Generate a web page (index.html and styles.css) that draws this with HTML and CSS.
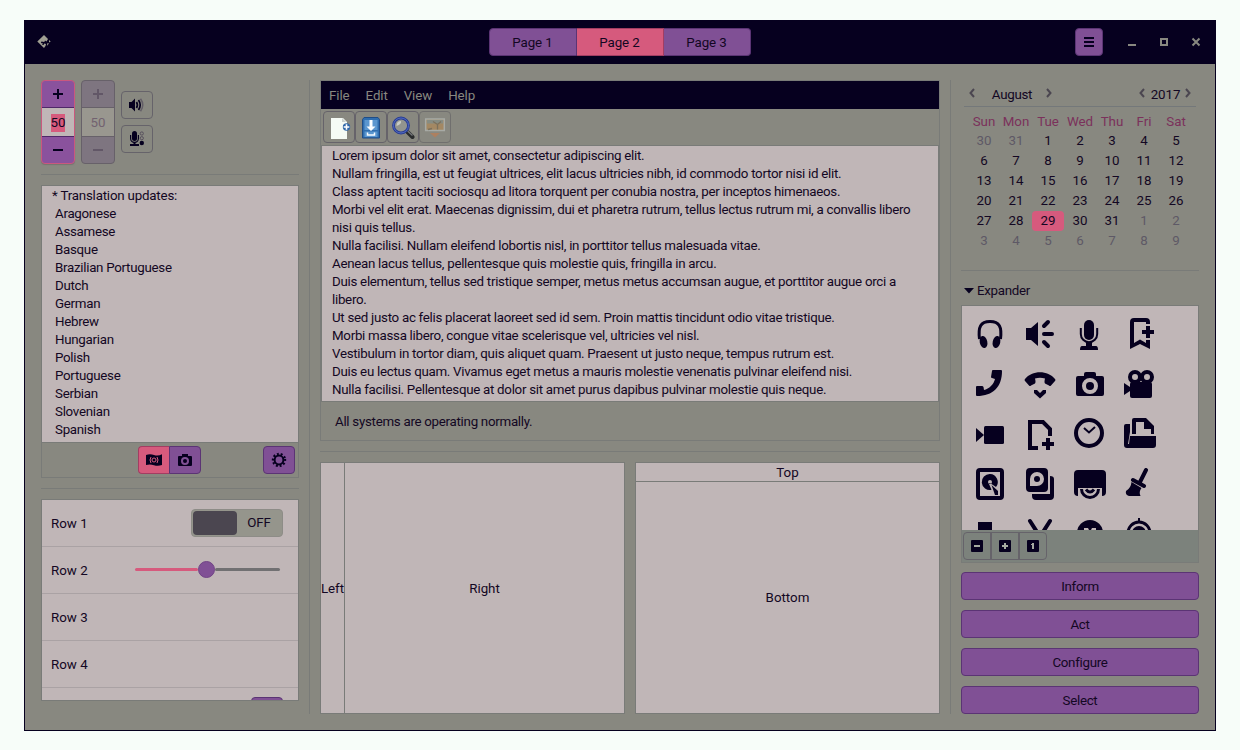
FILE: index.html
```html
<!DOCTYPE html>
<html lang="en">
<head>
<meta charset="utf-8">
<title>Widget Factory</title>
<link rel="stylesheet" href="styles.css">
</head>
<body>
<div class="window">
  <header class="titlebar">
    <svg class="app-icon" width="14" height="14" viewBox="0 0 14 14"><path fill="#a09f92" d="M7 0l4 4-1.500 2.500L8 5.500 7.300 7 4.500 6.500 3.800 8 6 8.500 5 10l1.500 0 .8-1.500L9 9l-.5 2L7 13 .3 6.500z"/><path fill="#a09f92" d="M12 5l1.700 1.600-1.700 1zM10.500 8l1.500.5L9.800 11z"/></svg>
    <div class="tabs"><button class="btn">Page 1</button><button class="btn active">Page 2</button><button class="btn">Page 3</button></div>
    <div class="controls">
      <button class="btn menu-btn"><svg width="10" height="10"><path fill="#06001f" d="M0 0h10v2H0zM0 4h10v2H0zM0 8h10v2H0z"/></svg></button>
      <svg class="ctl" width="12" height="12"><path fill="#888880" d="M2 8h8v2H2z"/></svg>
      <svg class="ctl" width="12" height="12"><path fill="none" stroke="#888880" stroke-width="2" d="M3 3h6v6H3z"/></svg>
      <svg class="ctl" width="12" height="12"><path fill="none" stroke="#888880" stroke-width="2" d="M2.500 2.500l7 7M9.500 2.500l-7 7"/></svg>
    </div>
  </header>
  <main class="content">
    <section class="left">
      <div class="spins">
        <div class="spin"><span class="step"><svg width="10" height="10"><path fill="#06001f" d="M4 0h2v10H4zM0 4h10v2H0z"/></svg></span><span class="value"><mark>50</mark></span><span class="step"><svg width="10" height="10"><path fill="#06001f" d="M0 4h10v2H0z"/></svg></span></div>
        <div class="spin off"><span class="step"><svg width="10" height="10"><path fill="#625767" d="M4 0h2v10H4zM0 4h10v2H0z"/></svg></span><span class="value">50</span><span class="step"><svg width="10" height="10"><path fill="#625767" d="M0 4h10v2H0z"/></svg></span></div>
        <div class="volumes">
          <button class="flat"><svg width="16" height="16" viewBox="0 0 16 16"><path fill="#06001f" d="M0 5h2.500L6 1.500v13L2.500 11H0z"/><path fill="none" stroke="#06001f" stroke-width="1.700" d="M7.500 5q1.800 3 0 6M9.500 3q3.400 5 0 10"/><path fill="none" stroke="#625d66" stroke-width="1.500" d="M11.500 1.800q4.500 6.200 0 12.400"/></svg></button>
          <button class="flat"><svg width="16" height="16" viewBox="0 0 16 16"><rect x="3" y="0" width="5" height="10" rx="2.500" fill="#06001f"/><path fill="none" stroke="#06001f" stroke-width="1.200" d="M1.600 4v3.500a3.900 3.900 0 0 0 7.800 0V4"/><path fill="#06001f" d="M4.500 11h2v2.500h-2zM1 13h9v2H1z"/><g fill="none" stroke="#57505d"><circle cx="12.800" cy="2.500" r="1.600"/><circle cx="12.800" cy="7.200" r="1.600"/></g><circle cx="12.800" cy="12" r="2.200" fill="#06001f"/></svg></button>
        </div>
      </div>
      <hr class="after-spins">
      <div class="language-box">
        <div class="languages"><p class="heading">* Translation updates:</p><p>Aragonese</p><p>Assamese</p><p>Basque</p><p>Brazilian Portuguese</p><p>Dutch</p><p>German</p><p>Hebrew</p><p>Hungarian</p><p>Polish</p><p>Portuguese</p><p>Serbian</p><p>Slovenian</p><p>Spanish</p></div>
        <div class="language-bar">
          <div class="pair">
            <button class="btn active"><svg width="16" height="16" viewBox="0 0 16 16"><path fill="#06001f" d="M0 3q4-1.500 8 0t8-.8V13q-4 1.500-8 .2T0 13z"/><path fill="none" stroke="#d65a7d" d="M5 5q-2 3 0 6M11 5q2 3 0 6"/><circle cx="8" cy="8" r="2" fill="none" stroke="#d65a7d"/></svg></button>
            <button class="btn"><svg width="16" height="16" viewBox="0 0 32 32"><path fill="#06001f" fill-rule="evenodd" d="M10 4h12v4h6q2 0 2 2v16q0 2-2 2H4q-2 0-2-2V10q0-2 2-2h6zM16 10a8 8 0 1 0 0 16 8 8 0 1 0 0-16z"/><circle cx="16" cy="18" r="4" fill="#06001f"/></svg></button>
          </div>
          <button class="btn gear"><svg width="16" height="16" viewBox="0 0 16 16"><circle cx="8" cy="8" r="4.400" fill="none" stroke="#06001f" stroke-width="2"/><circle cx="8" cy="8" r="6" fill="none" stroke="#06001f" stroke-width="2.400" stroke-dasharray="1.900 1.870" transform="rotate(-9 8 8)"/></svg></button>
        </div>
      </div>
      <hr class="after-list">
      <div class="rows">
        <div class="row"><span>Row 1</span><div class="switch"><i></i><b>OFF</b></div></div>
        <div class="row"><span>Row 2</span><div class="slider"><i class="done"></i><i class="knob"></i><i class="rest"></i></div></div>
        <div class="row"><span>Row 3</span></div>
        <div class="row"><span>Row 4</span></div>
        <div class="row last"><button class="btn"></button></div>
      </div>
    </section>
    <div class="divider"></div>
    <section class="middle">
      <div class="editor">
        <nav class="menubar"><span>File</span><span>Edit</span><span>View</span><span>Help</span></nav>
        <div class="toolbar">
          <button class="flat"><svg width="24" height="24" viewBox="0 0 24 24"><path fill="#f5fbf5" d="M4 3h12l4 4v17H4z"/><path fill="#cbd2cd" d="M15 3v4h4z"/><circle cx="19.500" cy="12" r="3.700" fill="#2f67a8"/><path stroke="#fff" stroke-width="1.600" d="M19.500 9.200v5.600M16.700 12h5.600"/></svg></button>
          <button class="flat"><svg width="24" height="24" viewBox="0 0 24 24"><path fill="#306eaf" stroke="#204d86" d="M5 2.500h14l1.500 2v18.500h-17V4.500z"/><path fill="#5a96cf" d="M5.500 5h13v10h-13zM5.500 16.500h13V22h-13z"/><path fill="#f8fcff" d="M10.500 5h3v6.500h3L12 16l-4.500-4.500h3z"/><path fill="none" stroke="#f8fcff" stroke-width="1.500" d="M8.500 17.500V20h7v-2.500"/></svg></button>
          <button class="flat"><svg width="24" height="24" viewBox="0 0 24 24"><path stroke="#292b2c" stroke-width="4" stroke-linecap="round" d="M16.500 17l5 5"/><path stroke="#75777a" stroke-width="1.300" d="M16.500 16l5 4.500"/><circle cx="10" cy="10.500" r="7.500" fill="#92948f" stroke="#283c92" stroke-width="2.800"/><circle cx="10" cy="10.500" r="7.500" fill="none" stroke="#526bc0"/><path fill="#c8cbc4" d="M5.500 11q0-5 4.500-5 1 3-4.500 5"/></svg></button>
          <button class="flat dim"><svg width="24" height="24" viewBox="0 0 24 24"><path fill="#a38863" stroke="#a7aaa5" stroke-width="1.500" d="M2.700 4h18.600v11.500H2.700z"/><path fill="#868c83" d="M4 5h16v3.500H4z"/><path fill="none" stroke="#7b705c" stroke-width="1.300" d="M10 6.500l4.500 3L18 6.500M14.500 9v5.500M5 14.500l4-1"/><path fill="#ad8060" d="M7 18h10l-5 4.500z"/></svg></button>
        </div>
        <div class="text">Lorem ipsum dolor sit amet, consectetur adipiscing elit.<br>Nullam fringilla, est ut feugiat ultrices, elit lacus ultricies nibh, id commodo tortor nisi id elit.<br>Class aptent taciti sociosqu ad litora torquent per conubia nostra, per inceptos himenaeos.<br>Morbi vel elit erat. Maecenas dignissim, dui et pharetra rutrum, tellus lectus rutrum mi, a convallis libero<br>nisi quis tellus.<br>Nulla facilisi. Nullam eleifend lobortis nisl, in porttitor tellus malesuada vitae.<br>Aenean lacus tellus, pellentesque quis molestie quis, fringilla in arcu.<br>Duis elementum, tellus sed tristique semper, metus metus accumsan augue, et porttitor augue orci a<br>libero.<br>Ut sed justo ac felis placerat laoreet sed id sem. Proin mattis tincidunt odio vitae tristique.<br>Morbi massa libero, congue vitae scelerisque vel, ultricies vel nisl.<br>Vestibulum in tortor diam, quis aliquet quam. Praesent ut justo neque, tempus rutrum est.<br>Duis eu lectus quam. Vivamus eget metus a mauris molestie venenatis pulvinar eleifend nisi.<br>Nulla facilisi. Pellentesque at dolor sit amet purus dapibus pulvinar molestie quis neque.</div>
        <div class="status">All systems are operating normally.</div>
      </div>
      <hr class="after-editor">
      <div class="panes">
        <div class="pane horizontal"><div class="pane-left">Left</div><div class="pane-right">Right</div></div>
        <div class="pane vertical"><div class="pane-top">Top</div><div class="pane-bottom">Bottom</div></div>
      </div>
    </section>
    <div class="divider"></div>
    <section class="right">
      <div class="cal-head">
        <svg width="8" height="10"><path d="M6 1 2.500 5 6 9"/></svg><span class="month">August</span><svg width="8" height="10"><path d="M2 1 5.500 5 2 9"/></svg>
        <svg class="year-prev" width="8" height="10"><path d="M6 1 2.500 5 6 9"/></svg><span class="year">2017</span><svg width="8" height="10"><path d="M2 1 5.500 5 2 9"/></svg>
      </div>
      <div class="calendar">
        <b>Sun</b><b>Mon</b><b>Tue</b><b>Wed</b><b>Thu</b><b>Fri</b><b>Sat</b>
        <i>30</i><i>31</i><span>1</span><span>2</span><span>3</span><span>4</span><span>5</span>
        <span>6</span><span>7</span><span>8</span><span>9</span><span>10</span><span>11</span><span>12</span>
        <span>13</span><span>14</span><span>15</span><span>16</span><span>17</span><span>18</span><span>19</span>
        <span>20</span><span>21</span><span>22</span><span>23</span><span>24</span><span>25</span><span>26</span>
        <span>27</span><span>28</span><span class="today">29</span><span>30</span><span>31</span><i>1</i><i>2</i>
        <i>3</i><i>4</i><i>5</i><i>6</i><i>7</i><i>8</i><i>9</i>
      </div>
      <hr class="after-cal">
      <div class="expander"><svg width="10" height="6"><path fill="#06001f" d="M0 0h10L5 5.500z"/></svg>Expander</div>
      <div class="icon-box">
        <div class="icons">
          <svg viewBox="0 0 32 32"><path class="s3" d="M5.500 21C4 9 6.500 3.500 16 3.500S28 9 26.500 21"/><ellipse cx="9.500" cy="24" rx="3.800" ry="6.200" transform="rotate(-12 9.500 24)"/><ellipse cx="22.500" cy="24" rx="3.800" ry="6.200" transform="rotate(12 22.500 24)"/></svg>
          <svg viewBox="0 0 32 32"><path d="M2 10h5l7-6v24l-7-6H2z"/><path class="s4r" d="M20 8l4-4M20 16h8M20 24l4 4"/></svg>
          <svg viewBox="0 0 32 32"><rect x="10" y="2" width="10" height="20" rx="5"/><path class="s2" d="M6.800 10v6a8.200 8.200 0 0 0 16.400 0v-6"/><path d="M12 24h6v4h4q2 0 2 4H6q0-4 2-4h4z"/></svg>
          <svg viewBox="0 0 32 32"><path d="M6 31V4q0-4 4-4h12q4 0 4 4v2h-4V4H10v21l6-3.500 6 3.500v-3h4v9l-10-5z"/><path d="M22 8h4v4h4v4h-4v4h-4v-4h-4v-4h4z"/></svg>
          <svg viewBox="0 0 32 32"><path d="M18 3q0-1 1-1h8q1 0 1 1c0 16-9 25-25 25q-1 0-1-1v-8q0-1 1-1h5q1 0 1.500 1l.5 3c5-1 10-6 11-11l-3-1q-1 0-1-1z"/></svg>
          <svg viewBox="0 0 32 32"><path d="M1 11C8 2 24 2 31 11q1 1 0 2l-4 4.500q-1 1-2 0l-4-2q-1-1 0-5-5-1.500-10 0 1 4 0 5l-4 2q-1 1-2 0L1 13q-1-1 0-2z"/><path d="M10 22h3l3 3 3-3h3v3l-6 5.500L10 25z"/></svg>
          <svg viewBox="0 0 32 32"><path fill-rule="evenodd" d="M10 6q0-2 2-2h8q2 0 2 2v2h6q2 0 2 2v16q0 2-2 2H4q-2 0-2-2V10q0-2 2-2h6zM16 10a8 8 0 1 0 0 16 8 8 0 1 0 0-16z"/><circle cx="16" cy="18" r="4"/></svg>
          <svg viewBox="0 0 32 32"><circle class="s4" cx="11" cy="9" r="5"/><circle class="s4" cx="23" cy="9" r="5"/><rect x="6" y="14" width="22" height="16" rx="2"/><path d="M0 15l6 4v4l-6 4z"/></svg>
          <svg viewBox="0 0 32 32"><path d="M2 10l8 7-8 7z"/><rect x="10" y="8" width="20" height="18" rx="1.500"/></svg>
          <svg viewBox="0 0 32 32"><path class="s4" d="M14 30H6V4h13l7 7v7"/><path d="M22 20h4v4h4v4h-4v4h-4v-4h-4v-4h4z"/></svg>
          <svg viewBox="0 0 32 32"><circle class="s4" cx="15" cy="15" r="13"/><path class="s2" d="M10 10l5 4.500L21 9"/></svg>
          <svg viewBox="0 0 32 32"><path d="M8 16V2q0-2 2-2h12l8 8v8h-3v-5h-7V4h-8v12z"/><path d="M6 18h26v9q0 3-3 3H3q-3 0-3-3V8q0-2 2-2h4v8L4 26h1z"/></svg>
          <svg viewBox="0 0 32 32"><rect class="s4" x="4" y="2" width="24" height="28" rx="2"/><path fill-rule="evenodd" d="M16 6a8 8 0 1 0 1.500 15.800L15 16l1-1 6 4A8 8 0 0 0 16 6zM16 12a2 2 0 1 1 0 4 2 2 0 1 1 0-4z"/><path d="M17.500 17l6.500 6v4h-3z"/></svg>
          <svg viewBox="0 0 32 32"><path fill-rule="evenodd" d="M6 0h14q4 0 4 4v16q0 4-4 4H6q-4 0-4-4V4q0-4 4-4zM13 4a7 7 0 0 0-7 7v7h7a7 7 0 0 0 0-14z"/><circle cx="13" cy="11" r="3"/><path d="M26 8q4 0 4 3v17q0 4-4 4H12q-4 0-4-4v-2h18z"/></svg>
          <svg viewBox="0 0 32 32"><path d="M4 2h24q4 0 4 4v18q0 4-4 4V20H4v8q-4 0-4-4V6q0-4 4-4z"/><path class="s3" d="M7.500 21a8.500 8.500 0 0 0 17 0M12 21.500q4 5 8 0"/></svg>
          <svg viewBox="0 0 32 32"><path class="s4r" d="M22 2l-6 12M9 12l11 6"/><path d="M7.500 14l10 6q-3 4-1 8H5q-4-1-3-5 5-3 5.500-9z"/></svg>
          <svg viewBox="0 0 32 32"><path d="M4 4h14v10h8v18H4z"/></svg>
          <svg viewBox="0 0 32 32"><path class="s4r" d="M6 3l14 22M26 3L12 25"/></svg>
          <svg viewBox="0 0 32 32"><path fill-rule="evenodd" d="M16 2a13 13 0 1 0 0 26 13 13 0 1 0 0-26zM10 10h4l1 2v3h-5zM18 10h4v5h-5v-3z"/></svg>
          <svg viewBox="0 0 32 32"><circle class="s3" cx="15" cy="15" r="11"/><circle cx="15" cy="15" r="7"/><path d="M14 0h2v5h-2z"/></svg>
        </div>
        <div class="icon-bar">
          <div class="trio">
            <span><svg width="12" height="12"><rect width="12" height="12" rx="1" fill="#06001f"/><path fill="#a5aaa1" d="M3 5h6v2H3z"/></svg></span>
            <span><svg width="12" height="12"><rect width="12" height="12" rx="1" fill="#06001f"/><path fill="#a5aaa1" d="M5 3h2v2h2v2H7v2H5V7H3V5h2z"/></svg></span>
            <span><svg width="12" height="12"><rect width="12" height="12" rx="1" fill="#06001f"/><path fill="#a5aaa1" d="M5 3h2v6H5V5H4V4h1z"/></svg></span>
          </div>
        </div>
      </div>
      <div class="actions"><button class="btn">Inform</button><button class="btn">Act</button><button class="btn">Configure</button><button class="btn">Select</button></div>
    </section>
  </main>
</div>
</body>
</html>
```
FILE: styles.css
```css
* { box-sizing: border-box; }
body { margin: 0; padding: 20px 24px 19px; height: 750px; background: #f7fdf9; color: #130723; font: 13.33px/18px Roboto, sans-serif; letter-spacing: -0.285px; overflow: hidden; }
p, hr { margin: 0; }
svg { display: block; flex: none; }
button { font: inherit; letter-spacing: inherit; color: inherit; padding: 0; margin: 0; }
hr { border: 0; height: 1px; background: #797b78; flex: none; }
i, b { font-style: normal; font-weight: normal; }

.window { width: 1192px; height: 711px; border: 1px solid #06001f; background: #888880; display: flex; flex-direction: column; }
.titlebar { height: 43px; flex: none; background: #06001f; display: grid; grid-template-columns: 1fr 262px 1fr; align-items: center; padding: 0 13px 1px 12px; }
.tabs { display: flex; height: 28px; letter-spacing: -0.1px; }
.tabs .btn { width: 88px; border-radius: 0; padding-top: 2px; }
.tabs .btn + .btn { border-left: 0; width: 87px; }
.tabs .btn:first-child { border-radius: 4px 0 0 4px; }
.tabs .btn:last-child { border-radius: 0 4px 4px 0; }
.controls { display: flex; justify-content: flex-end; align-items: center; gap: 20px; }
.menu-btn { width: 28px; margin-right: 3px; }
.btn { height: 28px; border: 1px solid #5b3474; border-radius: 4px; background: #805095; display: flex; align-items: center; justify-content: center; flex: none; }
.btn.active { background: #d65a7d; border-color: #a33d62; }
.flat { width: 32px; height: 28px; border: 1px solid #66636a; border-radius: 4px; background: none; display: flex; align-items: center; justify-content: center; flex: none; }

.content { flex: 1; display: flex; padding: 16px; min-height: 0; }
.divider { width: 1px; margin: 0 10px; background: #797b78; flex: none; }
.left { width: 258px; display: flex; flex-direction: column; }
.spins { display: flex; gap: 6px; height: 84px; letter-spacing: 0; }
.spin { width: 34px; border: 1px solid #ca587e; border-radius: 4px; background: #8a529d; display: grid; grid-template-rows: 26px 30px 26px; overflow: hidden; box-shadow: 0 1px 1px #77756f; }
.step, .value { display: flex; align-items: center; justify-content: center; }
.value { background: #c0b6b7; border: solid #4f2868; border-width: 1px 0; padding-top: 1px; }
.value mark { background: #d65a7d; color: #130723; }
.spin.off { background: #7e7580; border-color: #676169; color: #726270; box-shadow: none; }
.off .value { background: #99978f; border-color: #676169; }
.volumes { display: flex; flex-direction: column; gap: 6px; padding-top: 11px; }
.after-spins { margin: 10px 0; }
.language-box { height: 293px; border: 1px solid #797b78; flex: none; }
.languages { height: 257px; background: #c0b6b7; border-bottom: 1px solid #797b78; padding: 1px 13px 0; }
.languages .heading { margin-left: -3px; letter-spacing: -0.2px; }
.language-bar { height: 34px; display: grid; grid-template-columns: 96px 63px 1fr; padding: 3px 3px 0 0; }
.pair { display: flex; grid-column: 2; }
.pair .btn { width: 31px; border-radius: 4px 0 0 4px; border-right: 0; }
.pair .btn + .btn { width: 32px; border-radius: 0 4px 4px 0; border-right: 1px solid #5b3474; }
.gear { width: 32px; justify-self: end; }
.after-list { margin: 10px 0; }
.rows { height: 202px; border: 1px solid #797b78; background: #c0b6b7; overflow: hidden; flex: none; letter-spacing: 0; }
.row { height: 47px; border-bottom: 1px solid #aaa2a4; display: flex; align-items: center; justify-content: space-between; padding: 1px 15px 0 9px; }
.row.last { justify-content: flex-end; align-items: flex-start; padding-top: 9px; }
.last .btn { width: 32px; }
.switch { width: 92px; height: 28px; margin-top: -1px; border: 1px solid #8d8c87; border-radius: 4px; background: #95958c; display: flex; padding: 1px; align-items: center; letter-spacing: -0.2px; }
.switch i { width: 44px; height: 24px; border-radius: 4px; background: #4b4650; }
.switch b { flex: 1; text-align: center; }
.slider { width: 145px; height: 17px; display: flex; align-items: center; margin: -3px 3px 0 0; }
.done, .rest { height: 3px; background: #d65a7d; border-radius: 2px; width: 63px; }
.rest { flex: 1; background: #717072; }
.knob { width: 17px; height: 17px; border-radius: 50%; border: 1px solid #714486; background: #805095; }

.middle { width: 620px; display: flex; flex-direction: column; }
.editor { height: 361px; border: 1px solid #797b78; flex: none; }
.menubar { height: 28px; background: #06001f; color: #888880; display: flex; gap: 16px; padding: 6px 8px 4px; letter-spacing: -0.1px; }
.toolbar { height: 36px; display: flex; padding: 2px; }
.toolbar .flat { height: 32px; }
.dim { border-color: #706f6e; }
.text { height: 257px; background: #c0b6b7; border: 1px solid #797b78; padding: 1px 10px 0; white-space: nowrap; }
.status { padding: 11px 14px; }
.after-editor { margin: 10px 0; }
.panes { flex: 1; display: flex; justify-content: space-between; letter-spacing: 0; }
.pane { width: 305px; border: 1px solid #797b78; background: #c0b6b7; display: flex; }
.vertical { flex-direction: column; }
.pane > div { display: flex; align-items: center; justify-content: center; }
.horizontal > div { padding-top: 2px; }
.pane-left { width: 24px; border-right: 1px solid #797b78; }
.pane-right, .pane-bottom { flex: 1; }
.pane > .pane-top { height: 19px; border-bottom: 1px solid #797b78; padding-top: 2px; }

.right { width: 238px; display: flex; flex-direction: column; }
.cal-head { height: 27px; display: flex; align-items: flex-start; margin: 0 3px; padding: 5px 4px 0; border-bottom: 1px solid #74787a; flex: none; }
.cal-head path { fill: none; stroke: #4b4650; stroke-width: 2; }
.cal-head svg { margin-top: 3px; }
.month { width: 69px; padding: 1px 0 0 3px; text-align: center; }
.year-prev { margin-left: auto; }
.year { width: 38px; padding: 1px 0 0 1px; text-align: center; letter-spacing: -0.1px; }
.calendar { display: grid; grid-template-columns: repeat(7, 32px); grid-template-rows: 20px repeat(6, 20px); padding: 4px 7px 0; line-height: 20px; text-align: center; height: 144px; letter-spacing: 0; }
.calendar b { color: #7b315b; line-height: 22px; }
.calendar i { color: #5e5966; }
.today { background: #d65a7d; border-radius: 4px; }
.after-cal { margin: 19px 0 11px; }
.expander { display: flex; align-items: center; gap: 3px; height: 18px; padding-left: 3px; }
.icon-box { height: 258px; margin-top: 5px; border: 1px solid #797b78; background: #7c827c; flex: none; }
.icons { height: 224px; background: #c0b6b7; overflow: hidden; display: grid; grid-template-columns: repeat(4, 32px); grid-auto-rows: 32px; gap: 18px; padding: 12px; align-content: start; }
.icons svg { width: 32px; height: 32px; fill: #06001f; }
.s2, .s3, .s4, .s4r { fill: none; stroke: #06001f; stroke-width: 2; }
.s3 { stroke-width: 3; }
.s4, .s4r { stroke-width: 4; }
.s4r { stroke-linecap: round; }
.icon-bar { padding: 2px 1px; }
.trio { width: 84px; height: 28px; border: 1px solid #66636a; border-radius: 4px; display: grid; grid-template-columns: 26px 28px 28px; }
.trio span { display: flex; align-items: center; justify-content: center; }
.trio span + span { border-left: 2px solid #66636a; }
.actions { display: flex; flex-direction: column; gap: 10px; margin-top: 9px; }
.actions .btn { padding-top: 2px; }
```
